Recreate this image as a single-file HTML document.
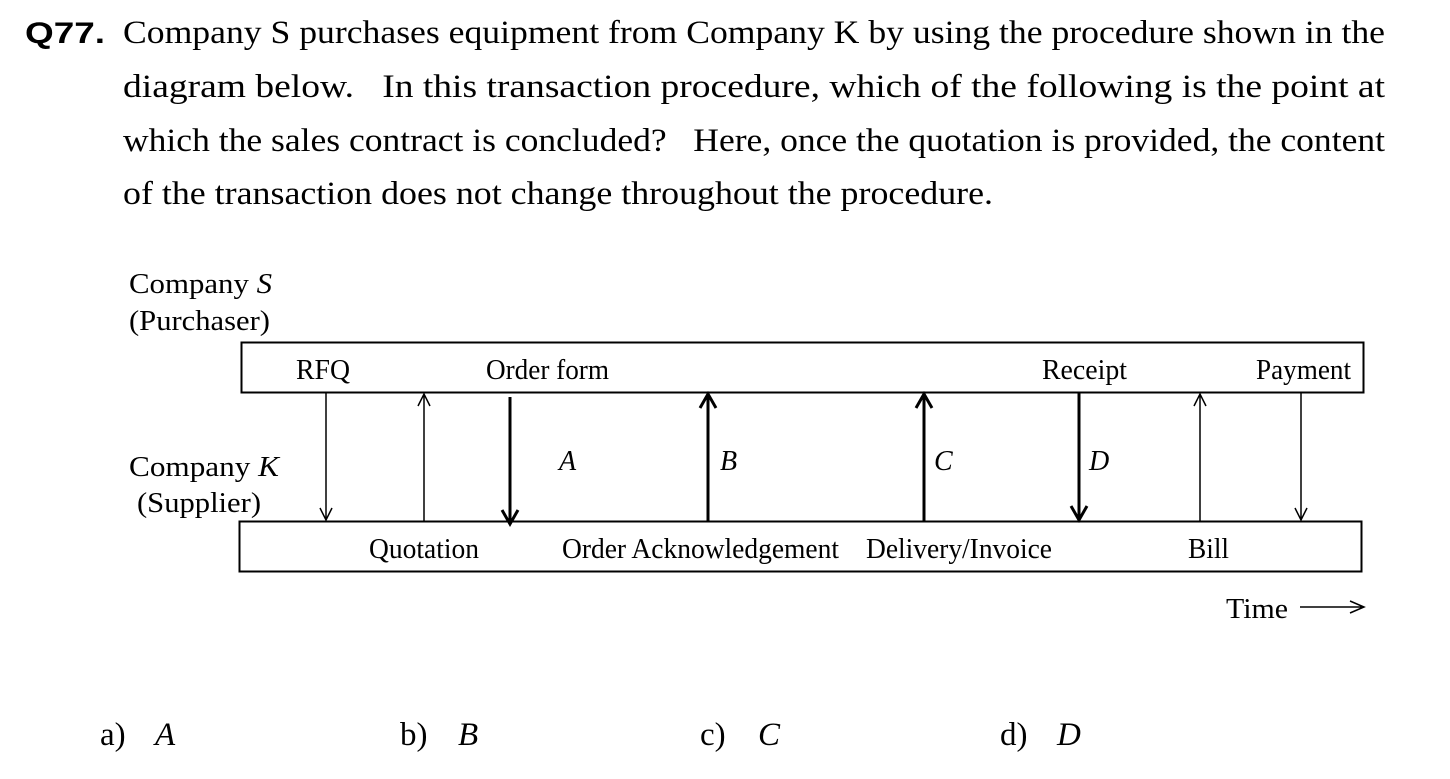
<!DOCTYPE html>
<html><head><meta charset="utf-8"><style>
html,body{margin:0;padding:0;background:#fff;}
svg{display:block}
.s{font-family:"Liberation Serif",serif;fill:#000}
</style></head><body>
<svg width="1450" height="779" viewBox="0 0 1450 779" xmlns="http://www.w3.org/2000/svg">
<text x="25" y="43" font-family="Liberation Sans, sans-serif" font-weight="bold" font-size="30" textLength="80" lengthAdjust="spacingAndGlyphs">Q77.</text>
<g class="s" font-size="33">
<text x="123" y="43" textLength="1262" lengthAdjust="spacingAndGlyphs">Company S purchases equipment from Company K by using the procedure shown in the</text>
<text x="123" y="97" textLength="1262" lengthAdjust="spacingAndGlyphs">diagram below.&#160;&#160; In this transaction procedure, which of the following is the point at</text>
<text x="123" y="151" textLength="1262" lengthAdjust="spacingAndGlyphs">which the sales contract is concluded?&#160;&#160; Here, once the quotation is provided, the content</text>
<text x="123" y="204" textLength="870" lengthAdjust="spacingAndGlyphs">of the transaction does not change throughout the procedure.</text>
</g>
<g class="s" font-size="28">
<text x="129" y="293" textLength="143" lengthAdjust="spacingAndGlyphs">Company <tspan font-style="italic">S</tspan></text>
<text x="129" y="330" textLength="141" lengthAdjust="spacingAndGlyphs">(Purchaser)</text>
<text x="129" y="476" textLength="150" lengthAdjust="spacingAndGlyphs">Company <tspan font-style="italic">K</tspan></text>
<text x="137" y="512" textLength="124" lengthAdjust="spacingAndGlyphs">(Supplier)</text>
<text x="296" y="379" textLength="54" lengthAdjust="spacingAndGlyphs">RFQ</text>
<text x="486" y="379" textLength="123" lengthAdjust="spacingAndGlyphs">Order form</text>
<text x="1042" y="379" textLength="85" lengthAdjust="spacingAndGlyphs">Receipt</text>
<text x="1256" y="379" textLength="95" lengthAdjust="spacingAndGlyphs">Payment</text>
<text x="369" y="558" textLength="110" lengthAdjust="spacingAndGlyphs">Quotation</text>
<text x="562" y="558" textLength="277" lengthAdjust="spacingAndGlyphs">Order Acknowledgement</text>
<text x="866" y="558" textLength="186" lengthAdjust="spacingAndGlyphs">Delivery/Invoice</text>
<text x="1188" y="558" textLength="41" lengthAdjust="spacingAndGlyphs">Bill</text>
<text x="1226" y="618" textLength="62" lengthAdjust="spacingAndGlyphs">Time</text>
<g font-style="italic">
<text x="559" y="470">A</text>
<text x="720" y="470">B</text>
<text x="934" y="470">C</text>
<text x="1089" y="470">D</text>
</g>
</g>
<g fill="none" stroke="#000">
<rect x="241.5" y="342.5" width="1122" height="50" stroke-width="2"/>
<rect x="239.5" y="521.5" width="1122" height="50" stroke-width="2"/>
<g stroke-width="1.5">
<path d="M326 393V520M320 508L326 520L332 508"/>
<path d="M424 521V394M418 406L424 394L430 406"/>
<path d="M1200 521V394M1194 406L1200 394L1206 406"/>
<path d="M1301 393V520M1295 508L1301 520L1307 508"/>
<path d="M1300 607H1363M1350 601L1364 607L1350 613"/>
</g>
<g stroke-width="3">
<path d="M510 397V524M502 510L510 524L518 510"/>
<path d="M708 521V394M700 408L708 394L716 408"/>
<path d="M924 521V394M916 408L924 394L932 408"/>
<path d="M1079 393V520M1071 506L1079 520L1087 506"/>
</g>
</g>
<g class="s" font-size="33">
<text x="100" y="745">a)</text><text x="155" y="745" font-style="italic">A</text>
<text x="400" y="745">b)</text><text x="458" y="745" font-style="italic">B</text>
<text x="700" y="745">c)</text><text x="758" y="745" font-style="italic">C</text>
<text x="1000" y="745">d)</text><text x="1057" y="745" font-style="italic">D</text>
</g>
</svg>
</body></html>
